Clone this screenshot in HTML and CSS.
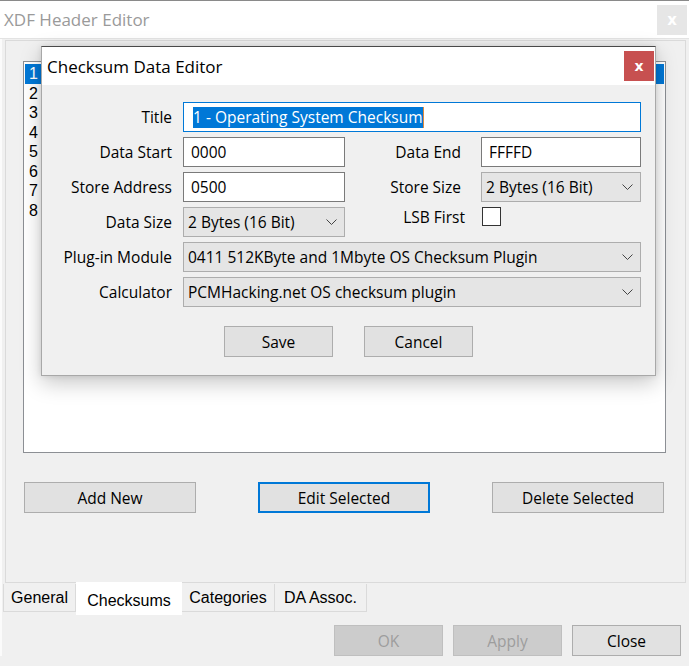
FILE: index.html
```html
<!DOCTYPE html>
<html>
<head>
<meta charset="utf-8">
<link rel="stylesheet" href="styles.css">
</head>
<body>
<div class="window">
  <div class="titlebar">
    <span class="title">XDF Header Editor</span>
    <span class="tb-close">x</span>
  </div>
  <div class="client">
    <div class="tabpage">
      <div class="listbox">
        <div class="item selected">1</div>
        <div class="item">2</div>
        <div class="item">3</div>
        <div class="item">4</div>
        <div class="item">5</div>
        <div class="item">6</div>
        <div class="item">7</div>
        <div class="item">8</div>
      </div>
      <div class="list-actions">
        <button class="btn wide">Add New</button>
        <button class="btn wide focused">Edit Selected</button>
        <button class="btn wide">Delete Selected</button>
      </div>
    </div>
    <div class="tabstrip">
      <div class="tab t-general">General</div>
      <div class="tab active">Checksums</div>
      <div class="tab t-cat">Categories</div>
      <div class="tab t-da">DA Assoc.</div>
    </div>
    <div class="footer">
      <button class="btn foot disabled">OK</button>
      <button class="btn foot disabled">Apply</button>
      <button class="btn foot">Close</button>
    </div>
  </div>

  <div class="dialog">
    <div class="dlg-titlebar">
      <span class="dlg-title">Checksum Data Editor</span>
      <span class="dlg-close">x</span>
    </div>
    <div class="dlg-body">
      <div class="form">
        <label class="lbl">Title</label>
        <div class="field text focus span3"><span class="sel">1 - Operating System Checksum</span><span class="caret"></span></div>

        <label class="lbl">Data Start</label>
        <div class="field text">0000</div>
        <label class="lbl lbl2">Data End</label>
        <div class="field text">FFFFD</div>

        <label class="lbl">Store Address</label>
        <div class="field text">0500</div>
        <label class="lbl lbl2">Store Size</label>
        <div class="field combo"><span>2 Bytes (16 Bit)</span><svg class="chev" width="11" height="7" viewBox="0 0 11 7"><polyline points="0.5,0.5 5.5,5.5 10.5,0.5" fill="none" stroke="#444" stroke-width="1"/></svg></div>

        <label class="lbl">Data Size</label>
        <div class="field combo"><span>2 Bytes (16 Bit)</span><svg class="chev" width="11" height="7" viewBox="0 0 11 7"><polyline points="0.5,0.5 5.5,5.5 10.5,0.5" fill="none" stroke="#444" stroke-width="1"/></svg></div>
        <label class="lbl lbl2 lsb">LSB First</label>
        <div class="checkcell"><span class="checkbox"></span></div>

        <label class="lbl">Plug-in Module</label>
        <div class="field combo span3"><span>0411 512KByte and 1Mbyte OS Checksum Plugin</span><svg class="chev" width="11" height="7" viewBox="0 0 11 7"><polyline points="0.5,0.5 5.5,5.5 10.5,0.5" fill="none" stroke="#444" stroke-width="1"/></svg></div>

        <label class="lbl">Calculator</label>
        <div class="field combo span3"><span>PCMHacking.net OS checksum plugin</span><svg class="chev" width="11" height="7" viewBox="0 0 11 7"><polyline points="0.5,0.5 5.5,5.5 10.5,0.5" fill="none" stroke="#444" stroke-width="1"/></svg></div>
      </div>
      <div class="dlg-actions">
        <button class="btn dlg">Save</button>
        <button class="btn dlg">Cancel</button>
      </div>
    </div>
  </div>
</div>
</body>
</html>
```

FILE: styles.css
```css
* { box-sizing: border-box; }
html, body { margin: 0; padding: 0; }
body {
  width: 689px;
  height: 666px;
  overflow: hidden;
  background: #f0f0f0;
  font-family: "Open Sans", "Noto Sans", sans-serif;
  font-size: 15.5px;
  color: #000;
}
.window {
  position: relative;
  width: 689px;
  height: 666px;
  border-top: 1px solid #8a8a8a;
  background: #f0f0f0;
}
.titlebar {
  height: 38px;
  background: #fff;
  display: flex;
  align-items: center;
  justify-content: space-between;
  padding-left: 4px;
  padding-right: 2px;
  border-bottom: 1px solid #e3e3e3;
}
.title {
  font-size: 17px;
  color: #9a9a9a;
}
.tb-close {
  width: 30px;
  height: 30px;
  background: #e6e6e6;
  color: #fff;
  font-family: "DejaVu Sans", sans-serif;
  font-size: 15px;
  font-weight: bold;
  display: flex;
  align-items: center;
  justify-content: center;
}
.client {
  padding: 1px 2px 0 2px;
  border-left: 2px solid #fbfbfb;
}
.tabpage {
  height: 543px;
  margin-left: 1px;
  margin-right: 1px;
  border: 1px solid #dadada;
  padding: 20px 19px 0 17px;
}
.listbox {
  height: 392px;
  background: #fff;
  border: 1px solid #8c8f94;
  padding: 2px 1px;
}
.item {
  height: 19.5px;
  line-height: 19.5px;
  padding-left: 4px;
  font-family: "Liberation Sans", Arial, sans-serif;
  font-size: 16px;
}
.item.selected {
  background: #0078d7;
  color: #fff;
}
.list-actions {
  display: flex;
  justify-content: space-between;
  margin-top: 29px;
  padding: 0 2px 0 1px;
}
.btn {
  font-family: "Open Sans", "Noto Sans", sans-serif;
  font-size: 15.5px;
  color: #000;
  background: #e1e1e1;
  border: 1px solid #adadad;
  padding: 0;
  height: 31px;
  display: flex;
  align-items: center;
  justify-content: center;
}
.btn.wide { width: 172px; }
.btn.focused { border: 2px solid #0078d7; }
.tabstrip {
  display: flex;
  align-items: flex-start;
  margin-left: -1px;
  height: 33px;
}
.tab {
  height: 28px;
  margin-top: 1px;
  border: 1px solid #dadada;
  border-top: none;
  font-family: "Liberation Sans", Arial, sans-serif;
  font-size: 16px;
  display: flex;
  align-items: center;
  justify-content: center;
  padding: 1px 0 0 0;
}
.t-general { width: 73px; }
.t-cat { width: 93px; border-left: none; }
.t-da { width: 92px; border-left: none; }
.tab.active {
  width: 106px;
  background: #fff;
  height: 33px;
  margin-top: -1px;
  padding: 5px 0 0 0;
  border: none;
}
.footer {
  display: flex;
  justify-content: flex-end;
  gap: 10px;
  margin-top: 9px;
  padding-right: 6px;
}
.btn.foot { width: 109px; }
.btn.disabled {
  background: #cccccc;
  border-color: #bfbfbf;
  color: #9d9d9d;
}

/* dialog */
.dialog {
  position: absolute;
  left: 41px;
  top: 45px;
  width: 615px;
  height: 330px;
  background: #f0f0f0;
  border: 1px solid #a8a8a8;
  border-top-color: #4a4a4a;
  box-shadow: 0 7px 20px rgba(0,0,0,0.22), 0 0 6px rgba(0,0,0,0.1);
}
.dlg-titlebar {
  height: 38px;
  background: #fff;
  display: flex;
  align-items: center;
  justify-content: space-between;
  padding-left: 5px;
  padding-right: 1px;
}
.dlg-title { font-size: 17px; color: #000; }
.dlg-close {
  width: 30px;
  height: 30px;
  background: #c75050;
  color: #fff;
  font-family: "DejaVu Sans", sans-serif;
  font-size: 14px;
  font-weight: bold;
  display: flex;
  align-items: center;
  justify-content: center;
}
.dlg-body { padding-top: 17px; }
.form {
  display: grid;
  grid-template-columns: 141px 162px 136px 160px;
  grid-auto-rows: 30px;
  row-gap: 5px;
}
.lbl {
  display: flex;
  align-items: center;
  justify-content: flex-end;
  padding-right: 11px;
  color: #000;
}
.lbl2 { padding-right: 20px; }
.lsb {
  padding-right: 16px;
  align-items: flex-start;
  line-height: 21px;
}
.span3 { grid-column: 2 / 5; }
.field {
  display: flex;
  align-items: center;
  height: 30px;
}
.field.text {
  background: #fff;
  border: 1px solid #7a7a7a;
  padding-left: 7px;
}
.field.focus {
  border-color: #0078d7;
  padding-left: 9px;
}
.sel {
  background: #0078d7;
  color: #fff;
  line-height: 21px;
}
.caret {
  width: 1px;
  height: 21px;
  background: #e08a3c;
}
.field.combo {
  background: #e5e5e5;
  border: 1px solid #adadad;
  padding-left: 4px;
  padding-right: 7px;
  justify-content: space-between;
}
.chev { display: block; }
.checkcell { display: flex; align-items: flex-start; padding-left: 1px; }
.checkbox {
  width: 19px;
  height: 19px;
  background: #fff;
  border: 1px solid #333;
}
.dlg-actions {
  display: flex;
  justify-content: center;
  gap: 31px;
  margin-top: 19px;
}
.btn.dlg { width: 109px; }
```
